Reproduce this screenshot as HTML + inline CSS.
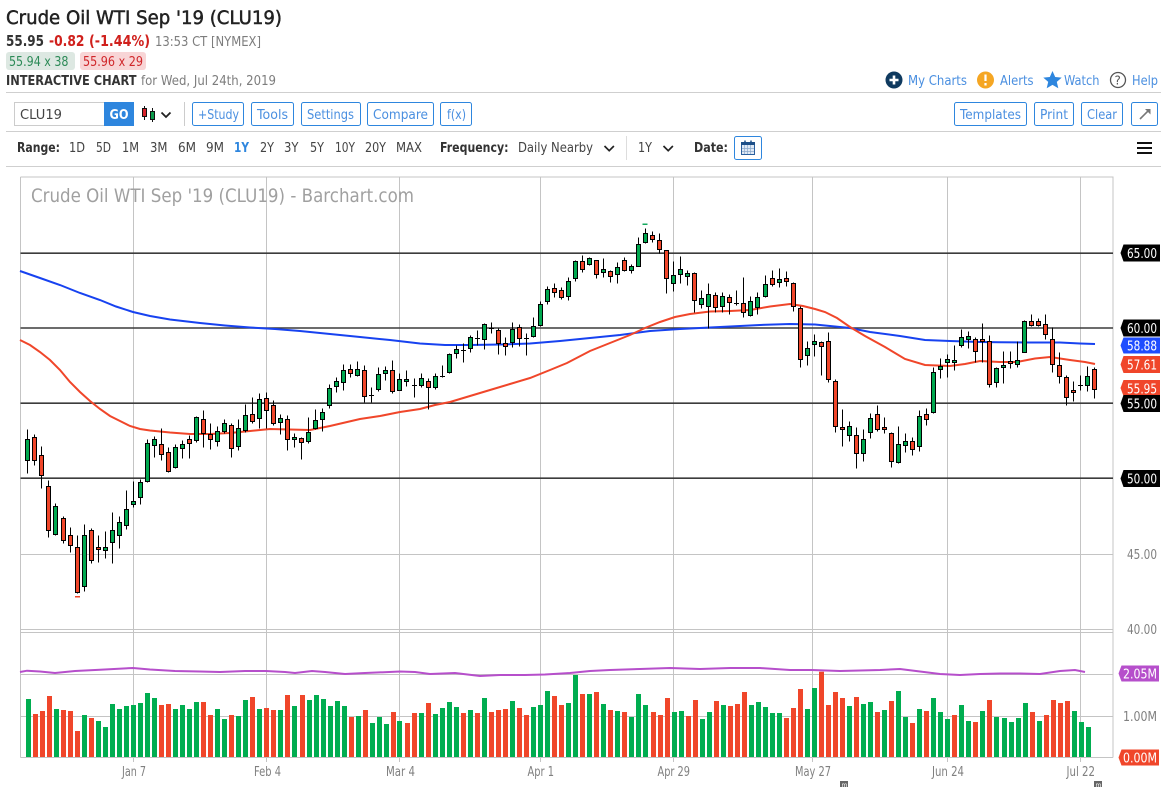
<!DOCTYPE html>
<html><head><meta charset="utf-8"><title>Crude Oil WTI Sep '19 (CLU19)</title>
<style>
html,body{margin:0;padding:0;background:#fff;overflow:hidden}
svg{display:block}
text{font-family:"DejaVu Sans","Liberation Sans",sans-serif;font-size:13.2px;fill:#444}
.b{font-weight:bold}
.bl{fill:#4a8fe0}
.g{fill:#7d7d7d}
.w{fill:#fff}
.btn{fill:#fff;stroke:#2e86de;stroke-width:1}
.t{font-size:13.2px;fill:#fff}
.ax{fill:#808080;font-size:13px}
</style></head><body>
<svg xmlns="http://www.w3.org/2000/svg" width="1169" height="787" viewBox="0 0 1169 787">
<rect width="1169" height="787" fill="#fff"/>
<text x="6" y="24" textLength="276" lengthAdjust="spacingAndGlyphs" style="font-size:19px;fill:#222;stroke:#222;stroke-width:.5">Crude Oil WTI Sep '19 (CLU19)</text>
<text x="6" y="46" textLength="38" lengthAdjust="spacingAndGlyphs" class="b" style="font-size:15.5px;fill:#333">55.95</text>
<text x="49" y="46" textLength="35.5" lengthAdjust="spacingAndGlyphs" class="b" style="font-size:15.5px;fill:#d0201c">-0.82</text>
<text x="89" y="46" textLength="61" lengthAdjust="spacingAndGlyphs" class="b" style="font-size:15.5px;fill:#d0201c">(-1.44%)</text>
<text x="155" y="46" textLength="106" lengthAdjust="spacingAndGlyphs" class="g">13:53 CT [NYMEX]</text>
<rect x="6" y="52" width="69" height="18" rx="3" fill="#dde8e2"/>
<text x="9" y="66" textLength="59.5" lengthAdjust="spacingAndGlyphs" style="fill:#2c8a57">55.94 x 38</text>
<rect x="80" y="52" width="66" height="18" rx="3" fill="#f8d5d6"/>
<text x="83" y="66" textLength="60" lengthAdjust="spacingAndGlyphs" style="fill:#d0262a">55.96 x 29</text>
<text x="6" y="85" textLength="130.5" lengthAdjust="spacingAndGlyphs" class="b" style="fill:#333">INTERACTIVE CHART</text>
<text x="141" y="85" textLength="135" lengthAdjust="spacingAndGlyphs" class="g">for Wed, Jul 24th, 2019</text>

<!-- top right links -->
<circle cx="894" cy="80" r="8.5" fill="#0f3a5f"/><path d="M894 75.5v9M889.5 80h9" stroke="#fff" stroke-width="2.6"/>
<text x="908" y="85" textLength="59" lengthAdjust="spacingAndGlyphs" class="bl">My Charts</text>
<circle cx="985.5" cy="80" r="8.5" fill="#f5a623"/><path d="M985.5 74.5v6.500M985.5 83v2.500" stroke="#fff" stroke-width="2.2"/>
<text x="1000" y="85" textLength="33.5" lengthAdjust="spacingAndGlyphs" class="bl">Alerts</text>
<path d="M1052.5 71l2.700 6 6.500.6-4.900 4.300 1.500 6.400-5.800-3.400-5.800 3.400 1.500-6.400-4.900-4.300 6.500-.6z" fill="#2e86de"/>
<text x="1064" y="85" textLength="35.5" lengthAdjust="spacingAndGlyphs" class="bl">Watch</text>
<circle cx="1118" cy="80" r="7.5" fill="none" stroke="#555" stroke-width="1.3"/>
<text x="1114.5" y="84.5" style="font-size:12px;fill:#555">?</text>
<text x="1132" y="85" textLength="26" lengthAdjust="spacingAndGlyphs" class="bl">Help</text>

<path d="M6 92.5H1161M6 131.5H1161M6 166.5H1161" stroke="#cfcfcf" stroke-width="1"/>

<!-- toolbar -->
<rect x="14.5" y="102.5" width="90" height="23" fill="#fff" stroke="#ccc"/>
<text x="20" y="119" textLength="42" lengthAdjust="spacingAndGlyphs" style="fill:#444;font-size:13.5px">CLU19</text>
<rect x="104" y="102" width="30" height="24" fill="#2e86de"/>
<text x="109.5" y="119" textLength="19" lengthAdjust="spacingAndGlyphs" class="b w" style="font-size:13.5px">GO</text>
<path d="M144.5 106v14M152.5 108v14" stroke="#111"/>
<rect x="142.5" y="108.5" width="4" height="8" fill="#d8222a" stroke="#111"/>
<rect x="150.5" y="111.5" width="4" height="8" fill="#0a9a4a" stroke="#111"/>
<path d="M161.5 112.5l4.500 4.500 4.500-4.500" fill="none" stroke="#222" stroke-width="1.8"/>
<path d="M184.5 102v24" stroke="#ccc"/>

<rect class="btn" x="192.5" y="102.5" width="51" height="23" rx="2"/><text x="198" y="119" textLength="41" lengthAdjust="spacingAndGlyphs" class="bl">+Study</text>
<rect class="btn" x="251.5" y="102.5" width="42" height="23" rx="2"/><text x="257" y="119" textLength="31" lengthAdjust="spacingAndGlyphs" class="bl">Tools</text>
<rect class="btn" x="301.5" y="102.5" width="59" height="23" rx="2"/><text x="307" y="119" textLength="47" lengthAdjust="spacingAndGlyphs" class="bl">Settings</text>
<rect class="btn" x="367.5" y="102.5" width="66" height="23" rx="2"/><text x="373" y="119" textLength="55" lengthAdjust="spacingAndGlyphs" class="bl">Compare</text>
<rect class="btn" x="440.5" y="102.5" width="31" height="23" rx="2"/><text x="447" y="119" textLength="19" lengthAdjust="spacingAndGlyphs" class="bl">f(x)</text>
<rect class="btn" x="954.5" y="102.5" width="72" height="23" rx="2"/><text x="960" y="119" textLength="61" lengthAdjust="spacingAndGlyphs" class="bl">Templates</text>
<rect class="btn" x="1034.5" y="102.5" width="39" height="23" rx="2"/><text x="1040" y="119" textLength="28" lengthAdjust="spacingAndGlyphs" class="bl">Print</text>
<rect class="btn" x="1081.5" y="102.5" width="41" height="23" rx="2"/><text x="1087" y="119" textLength="30" lengthAdjust="spacingAndGlyphs" class="bl">Clear</text>
<rect class="btn" x="1131.5" y="102.5" width="26" height="23" rx="2"/>
<path d="M1140 119l9-9" stroke="#777" stroke-width="1.6"/><path d="M1145 109h5.500v5.500z" fill="#777"/>

<!-- range row -->
<text x="17" y="152" textLength="43" lengthAdjust="spacingAndGlyphs" class="b" style="fill:#333">Range:</text>
<text x="69" y="152" textLength="16" lengthAdjust="spacingAndGlyphs">1D</text>
<text x="96" y="152" textLength="15" lengthAdjust="spacingAndGlyphs">5D</text>
<text x="122" y="152" textLength="17" lengthAdjust="spacingAndGlyphs">1M</text>
<text x="150" y="152" textLength="17.5" lengthAdjust="spacingAndGlyphs">3M</text>
<text x="178" y="152" textLength="18" lengthAdjust="spacingAndGlyphs">6M</text>
<text x="206" y="152" textLength="18" lengthAdjust="spacingAndGlyphs">9M</text>
<text x="234" y="152" textLength="15" lengthAdjust="spacingAndGlyphs" class="b" style="fill:#2e86de">1Y</text>
<text x="260" y="152" textLength="14" lengthAdjust="spacingAndGlyphs">2Y</text>
<text x="284" y="152" textLength="14.5" lengthAdjust="spacingAndGlyphs">3Y</text>
<text x="310" y="152" textLength="14" lengthAdjust="spacingAndGlyphs">5Y</text>
<text x="335" y="152" textLength="20" lengthAdjust="spacingAndGlyphs">10Y</text>
<text x="365" y="152" textLength="21" lengthAdjust="spacingAndGlyphs">20Y</text>
<text x="396" y="152" textLength="26" lengthAdjust="spacingAndGlyphs">MAX</text>
<text x="440" y="152" textLength="68.5" lengthAdjust="spacingAndGlyphs" class="b" style="fill:#333">Frequency:</text>
<text x="518" y="152" textLength="75" lengthAdjust="spacingAndGlyphs">Daily Nearby</text>
<path d="M604.5 146l4.700 4.700 4.700-4.700" fill="none" stroke="#222" stroke-width="1.7"/>
<path d="M626.5 136v24" stroke="#ddd"/>
<text x="638" y="152" textLength="14" lengthAdjust="spacingAndGlyphs">1Y</text>
<path d="M663.5 146l4.700 4.700 4.700-4.700" fill="none" stroke="#222" stroke-width="1.7"/>
<text x="694" y="152" textLength="34" lengthAdjust="spacingAndGlyphs" class="b" style="fill:#333">Date:</text>
<rect class="btn" x="734.5" y="136.5" width="27" height="23" rx="2"/>
<rect x="741.5" y="142.5" width="13" height="12" fill="#dfe9f5" stroke="#2a5f9e"/>
<rect x="741" y="142" width="14" height="3" fill="#1d4f88"/>
<path d="M745 140.5v3M751 140.5v3" stroke="#1d4f88" stroke-width="1.5"/>
<path d="M744.5 145v9M747.5 145v9M750.5 145v9M742 148.5h12M742 151.5h12" stroke="#8aa8cc" stroke-width=".7"/>
<path d="M1137 143h15M1137 148h15M1137 153h15" stroke="#111" stroke-width="2"/>

<!-- chart frame & grid -->
<path d="M20.5 177H1113.5M20.5 177V757.5M1113 177V757.5M133.5 177V762M266.5 177V762M399.5 177V762M540.5 177V762M673.5 177V762M812.5 177V762M947.5 177V762M1080.5 177V762M20.5 554.5H1113M20.5 629.5H1113M20.5 632.5H1113M20.5 674.5H1113M20.5 716.5H1113M20.5 757.5H1113" fill="none" stroke="#c4c4c4" stroke-width="1"/>
<text x="31" y="202" textLength="383" lengthAdjust="spacingAndGlyphs" style="font-size:19px;fill:#a0a0a0">Crude Oil WTI Sep '19 (CLU19) - Barchart.com</text>
<path d="M20.5 253.2H1113M20.5 328H1113M20.5 403.2H1113M20.5 478.2H1113" stroke="#3c3c3c" stroke-width="1.6"/>

<!-- moving averages -->
<path d="M20 271L40 278L60 285L80 293L100 300L116 306.500L133 312L150 316L170 319.500L200 323L225 325.500L250 327.500L275 329L300 331L330 334L360 337L390 340L420 343.500L445 345L470 345L500 344.500L530 343.500L560 341L590 338L620 335L650 331L680 329L700 328L730 326.500L760 325L790 324L815 324.500L830 326L850 328L870 332L900 336L925 340L950 341L980 342L1000 342.300L1030 342.500L1060 342.500L1080 343.500L1095 344" fill="none" stroke="#1742f0" stroke-width="2"/>
<path d="M20 340L30 345L40 352L50 360L60 370L70 382L80 392L90 401L100 409L110 416L120 421L130 426L140 429L150 430.500L170 432.500L190 434L210 434L230 433L250 431L270 429L290 429.500L310 430L330 426L345 422.500L360 419L380 416L400 412L420 409L435 405L450 402L470 396L490 390L510 384L530 378L550 370L567 363L590 351L610 343L630 335L645 328L660 322L675 317L690 314L710 311.500L730 311L750 310L770 306.500L790 304L803 306L815 309L825 312L837 318L850 327L865 336L885 347L905 359L925 365L950 366L965 364L980 361L1000 362L1017 362L1035 358.500L1050 357L1060 358.500L1070 360L1085 362L1095 364" fill="none" stroke="#f0462a" stroke-width="2"/>
<g id="cw"></g><g id="cb"></g>
<rect x="642.5" y="223.5" width="5" height="1.5" fill="#14a85e"/>
<rect x="75" y="596" width="5" height="1.5" fill="#f0462a"/>

<!-- volume -->
<g id="vol"></g>
<path d="M20 672L27 670.700L40 671.500L55 673L75 671L100 669.700L133 668L150 669.500L175 671L200 671.500L220 672L245 671L266 671L285 672L295 673L312 671L325 672L345 674L365 673L400 671.500L415 672L430 674L455 673L480 676L500 675L525 675L545 674.500L570 673L590 671L610 670L640 669L670 668L700 669L730 668L760 668L790 670L812 670L840 671L860 670.500L880 670L900 669L920 671.500L940 674L960 675L980 674L1000 673.500L1020 673.500L1040 674L1060 671L1075 670L1085 672" fill="none" stroke="#b64fcb" stroke-width="2"/>

<!-- axis tags -->
<text x="1127" y="559" textLength="30" lengthAdjust="spacingAndGlyphs" class="ax">45.00</text>
<text x="1127" y="634" textLength="30" lengthAdjust="spacingAndGlyphs" class="ax">40.00</text>
<text x="1123" y="721" textLength="34" lengthAdjust="spacingAndGlyphs" class="ax">1.00M</text>
<path d="M1120.5 253l3-8.500h36.500v17h-36.500z" fill="#000"/><text class="t" x="1127" y="258" textLength="30" lengthAdjust="spacingAndGlyphs">65.00</text>
<path d="M1120.5 328l3-8.500h36.500v17h-36.500z" fill="#000"/><text class="t" x="1127" y="333" textLength="30" lengthAdjust="spacingAndGlyphs">60.00</text>
<path d="M1120.5 345.500l3-8h36.500v16h-36.500z" fill="#1f4dff"/><text class="t" x="1127" y="350.5" textLength="30" lengthAdjust="spacingAndGlyphs">58.88</text>
<path d="M1120.5 364.500l3-8.500h36.500v17h-36.500z" fill="#f0462a"/><text class="t" x="1127" y="369.5" textLength="30" lengthAdjust="spacingAndGlyphs">57.61</text>
<path d="M1120.5 388l3-8h36.500v16h-36.500z" fill="#f0462a"/><text class="t" x="1127" y="393.5" textLength="30" lengthAdjust="spacingAndGlyphs">55.95</text>
<path d="M1120.5 403.500l3-8.500h36.500v17h-36.500z" fill="#000"/><text class="t" x="1127" y="408.5" textLength="30" lengthAdjust="spacingAndGlyphs">55.00</text>
<path d="M1120.5 478.500l3-8.500h36.500v17h-36.500z" fill="#000"/><text class="t" x="1127" y="483.5" textLength="30" lengthAdjust="spacingAndGlyphs">50.00</text>
<path d="M1118.5 673.500l3-8h37.500v16h-37.500z" fill="#b64fcb"/><text class="t" x="1123" y="678.5" textLength="34" lengthAdjust="spacingAndGlyphs">2.05M</text>
<path d="M1118.5 757.500l3-8h37.500v16h-37.500z" fill="#f0462a"/><text class="t" x="1123" y="762.5" textLength="34" lengthAdjust="spacingAndGlyphs">0.00M</text>

<!-- time axis -->
<text class="ax" x="122" y="776" textLength="24" lengthAdjust="spacingAndGlyphs">Jan 7</text>
<text class="ax" x="254" y="776" textLength="27" lengthAdjust="spacingAndGlyphs">Feb 4</text>
<text class="ax" x="386" y="776" textLength="29" lengthAdjust="spacingAndGlyphs">Mar 4</text>
<text class="ax" x="527.5" y="776" textLength="26.5" lengthAdjust="spacingAndGlyphs">Apr 1</text>
<text class="ax" x="657.5" y="776" textLength="32.5" lengthAdjust="spacingAndGlyphs">Apr 29</text>
<text class="ax" x="795" y="776" textLength="36" lengthAdjust="spacingAndGlyphs">May 27</text>
<text class="ax" x="932" y="776" textLength="32" lengthAdjust="spacingAndGlyphs">Jun 24</text>
<text class="ax" x="1066.5" y="776" textLength="28.5" lengthAdjust="spacingAndGlyphs">Jul 22</text>
<rect x="840" y="781" width="8" height="6" fill="#666"/><text x="841.5" y="787" style="font-size:6px;fill:#fff">m</text>
<rect x="1094" y="781" width="8" height="6" fill="#666"/><text x="1095.5" y="787" style="font-size:6px;fill:#fff">m</text>

<script>
(function(){
var NS="http://www.w3.org/2000/svg";
var W=[],B={g:[],r:[],k:[]};
function add(x0,y0,s){
  s.trim().split(/\s+/).forEach(function(e){
    var p=e.split(","),x=Math.floor(x0+p[0]/3)+.5;
    var f=function(v){return Math.round(y0+v/3)+.5};
    var wt=f(p[1]),bt=f(p[2]),bb=f(p[3]),wb=f(p[4]),c=p[5];
    W.push("M"+x+" "+wt+"V"+wb);
    if(c=="k"){B.k.push("M"+(x-2.5)+" "+bt+"h5");}
    else{B[c].push("M"+(x-2)+" "+bt+"h4V"+bb+"h-4z");}
  });
}
add(0,400,"82,88,118,181,218,g 103,102,110,181,196,r 124,138,166,226,265,r 145,240,259,391,410,r 166,310,319,403,404,g 190,349,355,421,430,r 211,381,406,436,455,r 232,405,442,575,578,r 253,372,406,559,572,g 274,385,391,481,488,r 295,405,442,448,485,r 316,393,442,451,473,g 337,337,391,427,488,g 358,349,367,406,443,g 379,270,328,376,386,g 400,243,304,313,320,g 421,238,247,292,311,g 442,118,130,244,247,g 463,109,118,136,172,g 484,85,133,163,181,r 505,142,157,214,217,r 526,133,142,202,205,g 547,121,133,145,175,g 568,105,118,130,175,r 589,49,52,121,127,g 610,30,58,100,142,r 631,70,103,118,148,r 652,79,94,124,139,g 673,58,70,94,100,g 694,70,76,145,172,r 715,58,85,139,151,g");
add(130,340,"346,192,226,271,275,g 367,172,223,244,250,r 388,160,178,235,263,g 409,157,175,211,265,r 430,181,196,250,256,r 451,223,235,247,283,g 472,226,238,298,331,r 493,280,292,298,320,g 514,292,295,307,358,r 535,232,277,304,310,g 556,208,241,265,268,g 577,205,217,238,274,g 598,133,145,196,205,g 619,112,124,139,157,g 640,73,91,127,151,g 661,73,88,100,112,r 682,64,88,106,109,g 703,76,91,169,187,r 724,142,166,169,187,k 745,82,103,148,154,g 766,79,91,100,121,g 787,61,91,154,160,r 808,100,118,151,151,g 829,91,118,124,139,g");
add(410,345,"13,100,119,120,155,k 34,85,100,121,127,g 55,100,109,127,193,r 76,85,94,127,133,g 97,60,92,93,97,k 118,25,28,82,85,g 139,0,13,25,40,g");
add(420,220,"130,369,391,392,426,k 151,345,351,384,396,g 172,330,355,356,375,k 193,309,312,357,387,g 214,306,325,326,339,k 235,324,330,369,402,r 256,351,369,378,405,r 277,306,327,366,381,g 298,312,321,354,378,r 319,339,353,354,405,k 340,291,318,348,351,g 361,243,252,315,318,g 382,198,207,243,252,g 403,189,204,216,231,r 424,201,210,231,237,r 445,171,183,228,240,g 466,120,123,174,183,g 487,105,123,148,157,r 508,111,114,133,136,g 529,120,121,163,175,r 550,114,147,157,172,g 571,150,153,169,187,r 592,126,141,163,190,g 613,111,120,150,154,r 634,132,138,151,160,g 655,52,73,139,139,g 676,24,40,65,70,g 697,32,45,58,66,r 718,40,61,88,100,r 739,91,91,175,218,r 760,124,166,190,212,g 781,108,148,163,190,g 802,150,160,169,196,g 823,157,160,241,277,r");
add(700,260,"4,90,115,133,144,g 25,70,103,139,205,g 46,97,106,142,157,r 67,97,109,139,157,g 88,103,112,127,162,r 109,90,130,131,135,k 130,52,130,157,172,r 151,109,124,166,169,g 172,97,112,142,163,g 196,46,73,109,110,g 217,30,55,73,79,r 238,25,58,65,82,g 259,33,55,64,78,r 280,67,70,139,154,r 301,139,145,298,322,r 322,244,265,286,314,g 343,223,244,253,287,g 364,244,247,259,344,r 385,217,244,358,367,r 406,358,364,499,515,r 427,447,502,508,559,r 448,484,499,526,544,g 469,502,526,580,625,r 490,508,538,580,602,g 511,460,475,517,535,g 532,436,463,508,514,r 553,472,502,508,520,r 574,517,520,604,620,r 595,499,553,607,610,g 616,520,544,556,577,g 637,532,544,568,584,r 658,451,469,559,574,g 679,445,463,478,496,r 700,322,337,457,458,g");
add(930,310,"31,145,169,178,203,g 52,133,148,157,202,g 73,106,151,157,180,g 94,58,82,106,112,g 115,64,79,88,115,g 136,82,88,124,155,r 157,40,88,94,155,r 178,76,94,223,230,r 199,170,175,215,232,g 220,124,166,172,220,g 241,124,154,160,174,r 262,94,151,163,172,g 283,30,34,127,127,g 304,13,34,46,48,r 325,25,34,46,48,r 346,13,43,73,88,r 367,52,88,163,185,r 388,127,166,199,220,r 409,196,202,262,285,r 430,214,241,247,272,r 451,196,226,228,240,k 472,169,199,226,244,g 493,172,178,238,263,r");
var cw=document.getElementById("cw"),cb=document.getElementById("cb");
function P(par,d,fill,stroke){var e=document.createElementNS(NS,"path");e.setAttribute("d",d);e.setAttribute("fill",fill);e.setAttribute("stroke",stroke);e.setAttribute("stroke-width",1);par.appendChild(e);}
P(cw,W.join(""),"none","#000");
P(cb,B.g.join(""),"#00a84f","#000");
P(cb,B.r.join(""),"#f0462a","#000");
P(cb,B.k.join(""),"none","#000");
/* volume */
var G=[],R=[];
function vol(x0,s){
  s.trim().split(/\s+/).forEach(function(e){
    var c=e[0],p=e.slice(1).split(","),x=Math.round(x0+p[0]/3-2.5),y=630+p[1]/3;
    (c=="G"?G:R).push("M"+x+" "+y.toFixed(1)+"h5V757h-5z");
  });
}
vol(0,"G85,207 R106,252 R127,243 R148,198 G169,237 R190,240 R211,243 R232,303 G253,255 R274,264 G295,273 G316,291 G337,222 G358,237 G379,228 G400,225 G421,219 G442,189 G463,204 R484,225 R505,222 G526,237 G547,225 G568,237 G589,216 R610,216 R631,255 G652,237 G673,267 R694,255 G715,258 G736,210 R757,201 G778,237 R799,234 R820,240 G841,240 R862,195 G883,228 R907,195 G928,210 G949,195 G970,207 G991,228 G1012,213 G1033,228 R1054,261 G1075,258 R1096,240 G1117,279 G1138,261 G1159,282 R1180,246 G1198,273");
vol(400,"R22,279 R43,249 G64,249 R85,219 G106,252 G127,234 G148,216 G169,231 R190,249 G211,240 R232,249 G253,204 R274,246 R295,240 R316,237 G337,213 R358,234 R379,255 G400,231 G421,225 G442,183 R463,198 R484,225 G505,219 G526,135 R547,192 G568,192 R589,186 G610,222 R631,240 G652,243 R673,246 G694,261 G715,192 G736,225 R760,246 R781,255 R802,204 G823,246 G844,243 R865,258 R886,210 G907,267 G928,246 R949,213 G970,225 R991,228 R1012,222 R1033,186 G1054,225 G1075,216 G1096,231");
vol(769,"G10,249 G31,249 R52,264 R73,234 R94,177 G115,237 G136,174 R157,125 R178,225 R199,186 R220,204 G241,228 R262,201 G283,222 G304,216 R325,246 G346,240 R367,213 G388,183 G409,261 R430,279 G451,237 R472,243 G493,204 G514,246 G535,267 R556,255 G577,225 G598,273 R619,276 G640,243 R661,210 G682,261 G706,264 G727,276 G748,264 G769,219 R790,246 G811,273 R832,255 R853,210 R874,219 R895,213 G916,243 G937,276 G958,291");
var v=document.getElementById("vol");
function Q(d,f){var e=document.createElementNS(NS,"path");e.setAttribute("d",d);e.setAttribute("fill",f);v.appendChild(e);}
Q(G.join(""),"#00ad50");Q(R.join(""),"#f0462a");
})();
</script>
</svg>
</body></html>
